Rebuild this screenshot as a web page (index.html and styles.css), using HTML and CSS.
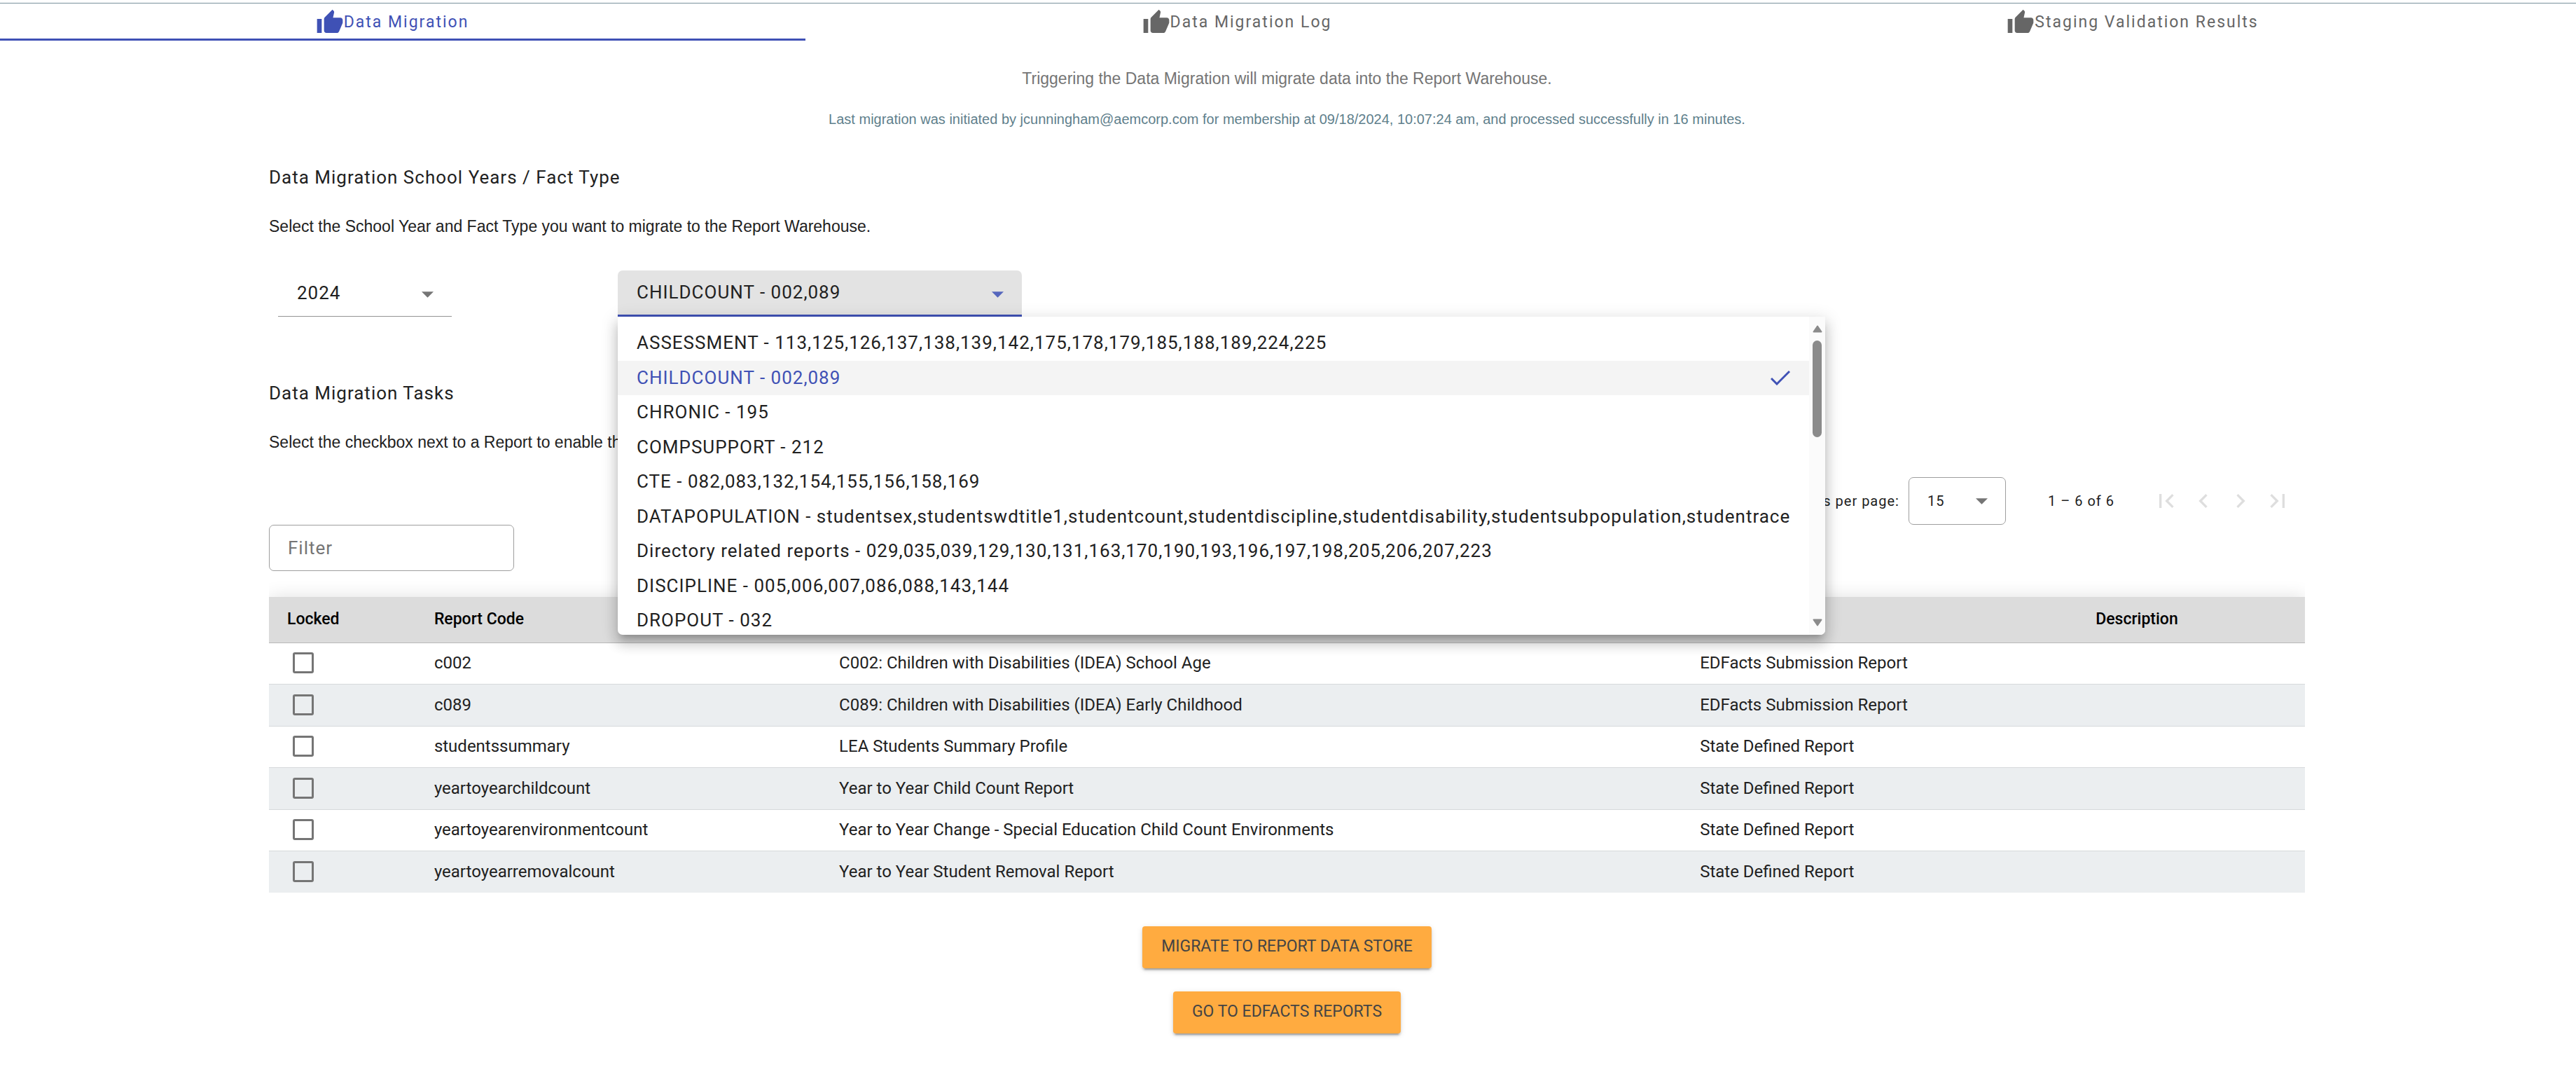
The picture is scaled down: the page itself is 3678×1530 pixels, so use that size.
FILE: index.html
```html
<!DOCTYPE html>
<html lang="en">
<head>
<meta charset="utf-8">
<title>Data Migration</title>
<link rel="stylesheet" href="styles.css">
</head>
<body>
<svg class="sprite" aria-hidden="true">
  <symbol id="thumb" viewBox="0 0 24 24"><path d="M1 21h4V9H1v12zm22-11c0-1.1-.9-2-2-2h-6.31l.95-4.57.03-.32c0-.41-.17-.79-.44-1.06L14.17 1 7.59 7.59C7.22 7.95 7 8.45 7 9v10c0 1.1.9 2 2 2h9c.83 0 1.54-.5 1.84-1.22l3.02-7.05c.09-.23.14-.47.14-.73v-2z"/></symbol>
  <symbol id="caret" viewBox="0 0 10 5"><path d="M0 0h10L5 5z"/></symbol>
</svg>
<nav class="tabs">
  <a class="tab tab-active" href="#migration"><svg class="icon"><use href="#thumb"/></svg><span>Data Migration</span></a>
  <a class="tab" href="#log"><svg class="icon"><use href="#thumb"/></svg><span>Data Migration Log</span></a>
  <a class="tab" href="#validation"><svg class="icon"><use href="#thumb"/></svg><span>Staging Validation Results</span></a>
</nav>
<main class="content">
  <p class="intro">Triggering the Data Migration will migrate data into the Report Warehouse.</p>
  <p class="status">Last migration was initiated by jcunningham@aemcorp.com for membership at 09/18/2024, 10:07:24 am, and processed successfully in 16 minutes.</p>

  <h2 class="heading">Data Migration School Years / Fact Type</h2>
  <p class="note">Select the School Year and Fact Type you want to migrate to the Report Warehouse.</p>
  <div class="fields">
    <div class="field field-year">
      <select class="select" aria-label="School Year"><option>2024</option></select>
      <svg class="caret"><use href="#caret"/></svg>
    </div>
    <div class="field field-fact">
      <select class="select" aria-label="Fact Type"><option>CHILDCOUNT - 002,089</option></select>
      <svg class="caret"><use href="#caret"/></svg>
      <div class="menu">
        <ul class="options" role="listbox" aria-label="Fact Type">
          <li class="option" role="option">ASSESSMENT - 113,125,126,137,138,139,142,175,178,179,185,188,189,224,225</li>
          <li class="option option-selected" role="option" aria-selected="true">CHILDCOUNT - 002,089<svg class="check" viewBox="0 0 28 22"><path d="M1 12l8 8L27 2"/></svg></li>
          <li class="option" role="option">CHRONIC - 195</li>
          <li class="option" role="option">COMPSUPPORT - 212</li>
          <li class="option" role="option">CTE - 082,083,132,154,155,156,158,169</li>
          <li class="option" role="option">DATAPOPULATION - studentsex,studentswdtitle1,studentcount,studentdiscipline,studentdisability,studentsubpopulation,studentrace</li>
          <li class="option" role="option">Directory related reports - 029,035,039,129,130,131,163,170,190,193,196,197,198,205,206,207,223</li>
          <li class="option" role="option">DISCIPLINE - 005,006,007,086,088,143,144</li>
          <li class="option" role="option">DROPOUT - 032</li>
        </ul>
        <div class="scrollbar" aria-hidden="true">
          <svg class="arrow" viewBox="0 0 14 11"><path d="M7 1.5L12.5 9.5h-11z"/></svg>
          <div class="track"><div class="thumb"></div></div>
          <svg class="arrow" viewBox="0 0 14 11"><path d="M7 9.5L12.5 1.5h-11z"/></svg>
        </div>
      </div>
    </div>
  </div>

  <h2 class="heading heading-tasks">Data Migration Tasks</h2>
  <p class="note">Select the checkbox next to a Report to enable the migration of that Report.</p>
  <div class="paginator">
    <label for="page-size">Items per page:</label>
    <div class="page-size">
      <select class="size-select" id="page-size"><option>15</option></select>
      <svg class="caret"><use href="#caret"/></svg>
    </div>
    <span class="range">1 – 6 of 6</span>
    <div class="pager">
      <button class="page-btn" disabled aria-label="First page"><svg class="icon" viewBox="0 0 24 24"><path d="M18.41 16.59L13.82 12l4.59-4.59L17 6l-6 6 6 6zM6 6h2v12H6z"/></svg></button>
      <button class="page-btn" disabled aria-label="Previous page"><svg class="icon" viewBox="0 0 24 24"><path d="M15.41 7.41L14 6l-6 6 6 6 1.41-1.41L10.83 12z"/></svg></button>
      <button class="page-btn" disabled aria-label="Next page"><svg class="icon" viewBox="0 0 24 24"><path d="M10 6L8.59 7.41 13.17 12l-4.58 4.59L10 18l6-6z"/></svg></button>
      <button class="page-btn" disabled aria-label="Last page"><svg class="icon" viewBox="0 0 24 24"><path d="M5.59 7.41L10.18 12l-4.59 4.59L7 18l6-6-6-6zM16 6h2v12h-2z"/></svg></button>
    </div>
  </div>
  <input class="filter" type="text" placeholder="Filter" aria-label="Filter">
  <table class="reports">
    <colgroup><col class="col-locked"><col class="col-code"><col class="col-name"><col class="col-type"><col></colgroup>
    <thead>
      <tr><th>Locked</th><th>Report Code</th><th>Report Name</th><th>Report Type</th><th>Description</th></tr>
    </thead>
    <tbody>
      <tr><td><input class="box" type="checkbox" aria-label="c002"></td><td>c002</td><td>C002: Children with Disabilities (IDEA) School Age</td><td>EDFacts Submission Report</td><td></td></tr>
      <tr><td><input class="box" type="checkbox" aria-label="c089"></td><td>c089</td><td>C089: Children with Disabilities (IDEA) Early Childhood</td><td>EDFacts Submission Report</td><td></td></tr>
      <tr><td><input class="box" type="checkbox" aria-label="studentssummary"></td><td>studentssummary</td><td>LEA Students Summary Profile</td><td>State Defined Report</td><td></td></tr>
      <tr><td><input class="box" type="checkbox" aria-label="yeartoyearchildcount"></td><td>yeartoyearchildcount</td><td>Year to Year Child Count Report</td><td>State Defined Report</td><td></td></tr>
      <tr><td><input class="box" type="checkbox" aria-label="yeartoyearenvironmentcount"></td><td>yeartoyearenvironmentcount</td><td>Year to Year Change - Special Education Child Count Environments</td><td>State Defined Report</td><td></td></tr>
      <tr><td><input class="box" type="checkbox" aria-label="yeartoyearremovalcount"></td><td>yeartoyearremovalcount</td><td>Year to Year Student Removal Report</td><td>State Defined Report</td><td></td></tr>
    </tbody>
  </table>
  <div class="actions">
    <button class="action">MIGRATE TO REPORT DATA STORE</button>
    <button class="action">GO TO EDFACTS REPORTS</button>
  </div>
</main>
</body>
</html>
```
FILE: styles.css
```css
* { box-sizing: border-box; }

body {
  margin: 0;
  padding-top: 4px;
  background: #fff;
  color: #212121;
  font-family: Roboto, "Liberation Sans", sans-serif;
  font-size: 23px;
}

h2, p, ul { margin: 0; padding: 0; }
button, input, select { font: inherit; color: inherit; letter-spacing: inherit; }
.sprite { display: none; }
.icon { width: 40px; height: 40px; fill: currentColor; flex: none; display: block; }

/* Tabs */
.tabs {
  display: grid;
  grid-template-columns: 1150fr 1262fr 1266fr;
  border-top: 1px solid #78909c;
}
.tab {
  display: flex;
  align-items: center;
  justify-content: center;
  height: 53px;
  color: #666;
  font-size: 23px;
  letter-spacing: 2px;
  text-decoration: none;
}
.tab:not(:last-child) { padding-right: 30px; }
.tab-active { color: #3f51b5; box-shadow: inset 0 -3px #3f51b5; }

/* Page content */
.content { padding: 38px 387px 48px 384px; }
.intro, .status, .note {
  font-family: "Liberation Sans", Arial, sans-serif;
  font-size: 23px;
  line-height: 32px;
  white-space: nowrap;
}
.intro, .status { text-align: center; }
.intro { color: #757575; }
.status { margin-top: 26px; color: #5f7f8c; font-size: 20px; }
.heading {
  margin-top: 47px;
  font-size: 26px;
  font-weight: 400;
  line-height: 40px;
  letter-spacing: 1px;
}
.heading-tasks { margin-top: 89px; }
.note { margin-top: 34px; }

/* Drop-down fields */
.fields {
  display: flex;
  gap: 237px;
  margin-top: 47px;
  padding-left: 13px;
  font-size: 26px;
  letter-spacing: 1px;
}
.field { position: relative; height: 66px; }
.select {
  width: 100%;
  height: 100%;
  padding: 0 27px 2px;
  appearance: none;
  border: 0;
  border-bottom: 1px solid #949494;
  background: transparent;
}
.caret {
  position: absolute;
  right: 26px;
  top: 30px;
  width: 17px;
  height: 9px;
  fill: #757575;
  pointer-events: none;
}
.field-year { width: 248px; }
.field-fact { width: 577px; }
.field-fact .select {
  border-bottom: 3px solid #3f51b5;
  border-radius: 7px 7px 0 0;
  background: #e3e3e3;
}
.field-fact .caret { fill: #5566bd; }

.menu {
  position: absolute;
  z-index: 2;
  top: 100%;
  left: 0;
  display: flex;
  width: max-content;
  height: 454px;
  overflow: hidden;
  border-radius: 0 0 7px 7px;
  background: #fff;
  box-shadow: 0 8px 8px -5px rgba(0, 0, 0, .2), 0 13px 17px 2px rgba(0, 0, 0, .14), 0 5px 23px 3px rgba(0, 0, 0, .12);
}
.options { padding-top: 13px; list-style: none; }
.option {
  display: flex;
  align-items: center;
  justify-content: space-between;
  height: 50px;
  padding: 0 27px 2px;
  white-space: nowrap;
}
.option:nth-child(even) { height: 49px; }
.option-selected { background: #f4f4f4; color: #3f51b5; }
.check { width: 28px; height: 22px; fill: none; stroke: currentColor; stroke-width: 3; }
.scrollbar {
  display: flex;
  flex-direction: column;
  align-items: center;
  gap: 11px;
  width: 23px;
  padding: 12px 0;
  background: #fbfbfb;
}
.arrow { width: 14px; height: 11px; flex: none; fill: #8b8b8b; stroke: #8b8b8b; stroke-width: 2; stroke-linejoin: round; }
.track { flex: 1; }
.thumb { width: 13px; height: 138px; border-radius: 7px; background: #8b8b8b; }

/* Paginator */
.paginator {
  display: flex;
  align-items: center;
  justify-content: flex-end;
  margin-top: 34px;
  padding-right: 13px;
  font-size: 20px;
  letter-spacing: 1px;
}
.page-size { position: relative; width: 139px; height: 68px; margin-left: 13px; }
.size-select {
  width: 100%;
  height: 100%;
  padding: 0 26px;
  appearance: none;
  border: 1px solid #9e9e9e;
  border-radius: 7px;
  background: transparent;
}
.range { margin-left: 60px; }
.pager { display: flex; margin-left: 47px; }
.page-btn {
  display: flex;
  align-items: center;
  justify-content: center;
  width: 53px;
  height: 66px;
  padding: 0;
  border: 0;
  background: none;
  color: #dedede;
}

.filter {
  display: block;
  width: 350px;
  height: 66px;
  padding: 0 26px;
  border: 1px solid #9e9e9e;
  border-radius: 7px;
  background: transparent;
  font-size: 26px;
  letter-spacing: 1px;
}
.filter::placeholder { color: #757575; opacity: 1; }

/* Reports table */
.reports {
  width: 100%;
  margin-top: 37px;
  table-layout: fixed;
  border-collapse: separate;
  border-spacing: 0;
  box-shadow: 0 2px 26px rgba(0, 0, 0, .14);
  clip-path: inset(-32px 0 0 0);
  background: #fff;
  text-align: left;
  font-size: 24px;
}
.col-locked { width: 7.22%; }
.col-code { width: 19.89%; }
.col-name { width: 42.28%; }
.col-type { width: 19.44%; }
th, td { padding: 0 26px 2px; border-bottom: 1px solid #d6d9db; white-space: nowrap; }
th { height: 66px; border-color: #b8b8b8; background: #dcdcdc; color: #000; font-size: 23px; font-weight: 500; }
td { height: 59px; }
tbody tr:nth-child(even) { background: #ebeef0; }
tbody tr:nth-child(even) td { height: 60px; }
tbody tr:last-child td { height: 59px; border-bottom: 0; }
.box {
  display: block;
  width: 30px;
  height: 30px;
  margin: 0 0 0 8px;
  appearance: none;
  border: 3px solid #757575;
  border-radius: 3px;
}

/* Actions */
.actions {
  display: flex;
  flex-direction: column;
  align-items: center;
  gap: 33px;
  margin-top: 48px;
}
.action {
  height: 60px;
  padding: 0 27px 4px;
  border: 0;
  border-radius: 4px;
  background: #ffab40;
  color: #444;
  box-shadow: 0 5px 2px -3px rgba(0, 0, 0, .2), 0 3px 3px rgba(0, 0, 0, .14), 0 2px 8px rgba(0, 0, 0, .12);
  font-size: 23px;
}
```
